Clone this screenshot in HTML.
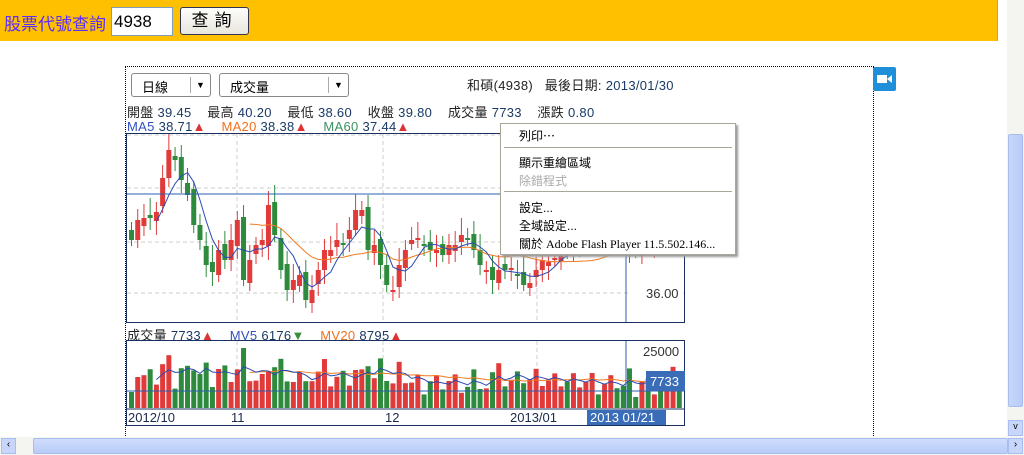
<!DOCTYPE html>
<html><head><meta charset="utf-8"><style>
*{margin:0;padding:0;box-sizing:border-box}
html,body{width:1024px;height:455px;overflow:hidden}
body{background:#fff;font-family:"Liberation Sans","Noto Sans CJK TC",sans-serif;position:relative}
.top{position:absolute;left:0;top:0;width:998px;height:41px;background:#FFC000;border-right:1px solid #e8a000}
.lbl{position:absolute;left:4px;top:10px;font-size:17px;color:#5a2cff}
.inp{position:absolute;left:111px;top:7px;width:62px;height:29px;background:#fff;border:1px solid #7f9db9;font-size:17px;padding:4px 2px}
.btn{position:absolute;left:180px;top:7px;width:69px;height:28px;background:linear-gradient(#fdfdfb,#e8e6dc);border:1px solid #335;border-radius:3px;font-size:17px;text-align:center;line-height:26px;letter-spacing:6px}
.frame{position:absolute;left:125px;top:66px;width:749px;height:380px;border:1px dotted #000}
.t{position:absolute;font-size:13px;color:#222;white-space:nowrap;letter-spacing:0.3px}
.n{color:#1a3a66}
.sel{position:absolute;top:73px;height:24px;border:1px solid #888;border-radius:3px;background:#fff;font-size:13px;padding:3px 10px}
.sel i{position:absolute;right:0;top:3px;width:20px;height:16px;border-left:1px solid #aaa;font-style:normal;font-size:9px;text-align:center;line-height:16px}
.menu{position:absolute;left:500px;top:123px;width:236px;height:132px;background:#fff;border:1px solid #aaa69a;box-shadow:2px 2px 2px #999;font-size:12px}
.menu div{position:absolute;left:18px}
.menu hr{position:absolute;left:3px;width:228px;border:0;border-top:1px solid #aaa69a}
.vs{position:absolute;left:1007px;top:0;width:17px;height:437px;background:#f4f4f0}
.hs{position:absolute;left:0;top:437px;width:1024px;height:18px;background:#f4f4f0}
</style></head><body>
<div class="top"><div class="lbl">股票代號查詢</div><div class="inp">4938</div><div class="btn">查詢</div></div>
<div class="frame"></div>
<div style="position:absolute;left:873px;top:67px;width:23px;height:24px;background:#1e8fd8;border-radius:2px"><div style="position:absolute;left:4px;top:8px;width:10px;height:8px;background:#fff"></div><div style="position:absolute;left:14px;top:8px;width:0;height:0;border-top:4px solid transparent;border-bottom:4px solid transparent;border-right:5px solid #fff"></div></div>
<div class="sel" style="left:131px;width:80px">日線<i>▼</i></div>
<div class="sel" style="left:219px;width:130px">成交量<i>▼</i></div>
<div class="t" style="left:467px;top:75px">和碩(4938)&nbsp;&nbsp; 最後日期: <span class="n">2013/01/30</span></div>
<div class="t" style="left:127px;top:102px">開盤 <span class="n">39.45</span>&nbsp;&nbsp;&nbsp; 最高 <span class="n">40.20</span>&nbsp;&nbsp;&nbsp; 最低 <span class="n">38.60</span>&nbsp;&nbsp;&nbsp; 收盤 <span class="n">39.80</span>&nbsp;&nbsp;&nbsp; 成交量 <span class="n">7733</span>&nbsp;&nbsp;&nbsp; 漲跌 <span class="n">0.80</span></div>
<div class="t" style="left:127px;top:119px"><span style="color:#3050c0">MA5</span> <span class="n">38.71</span><span style="color:#d33">▲</span>&nbsp;&nbsp;&nbsp; <span style="color:#f07020">MA20</span> <span class="n">38.38</span><span style="color:#d33">▲</span>&nbsp;&nbsp;&nbsp; <span style="color:#3a9060">MA60</span> <span class="n">37.44</span><span style="color:#d33">▲</span></div>
<div class="t" style="left:127px;top:325px">成交量 <span class="n">7733</span><span style="color:#d33">▲</span>&nbsp;&nbsp;&nbsp; <span style="color:#3050c0">MV5</span> <span class="n">6176</span><span style="color:#3a9040">▼</span>&nbsp;&nbsp;&nbsp; <span style="color:#f07020">MV20</span> <span class="n">8795</span><span style="color:#d33">▲</span></div>
<svg id="c" width="1024" height="455" style="position:absolute;left:0;top:0"></svg>
<div class="menu">
<div style="top:3px">列印⋯</div><hr style="top:23px">
<div style="top:30px">顯示重繪區域</div><div style="top:48px;color:#aaa">除錯程式</div><hr style="top:67px">
<div style="top:75px">設定...</div><div style="top:93px">全域設定...</div><div style="top:111px;font-family:'Liberation Serif','Noto Sans CJK TC',serif">關於 Adobe Flash Player 11.5.502.146...</div>
</div>
<div class="vs"><div style="position:absolute;left:1px;top:134px;width:15px;height:273px;background:linear-gradient(90deg,#c8d6fb,#b8ccf8);border:1px solid #a9bdee;border-radius:2px"></div><div style="position:absolute;left:1px;top:420px;width:15px;height:16px;background:#c8d6fb;border:1px solid #a9bdee;font-size:9px;text-align:center">v</div></div>
<div class="hs"><div style="position:absolute;left:1px;top:1px;width:15px;height:16px;background:#c8d6fb;border:1px solid #a9bdee;font-size:10px;text-align:center">‹</div><div style="position:absolute;left:33px;top:1px;width:975px;height:16px;background:linear-gradient(#d0ddfc,#b8ccf8);border:1px solid #a9bdee;border-radius:2px"></div><div style="position:absolute;left:1008px;top:1px;width:15px;height:16px;background:#c8d6fb;border:1px solid #a9bdee;font-size:10px;text-align:center">›</div></div>
<script>
var s=document.getElementById('c'),h='';
function R(x,y,w,hh,f,st){h+='<rect x="'+x+'" y="'+y+'" width="'+w+'" height="'+hh+'" fill="'+f+'"'+(st?' stroke="'+st+'"':'')+'/>';}
function L(x1,y1,x2,y2,c,d){h+='<line x1="'+x1+'" y1="'+y1+'" x2="'+x2+'" y2="'+y2+'" stroke="'+c+'"'+(d?' stroke-dasharray="4,3"':'')+'/>';}
[135,188,242,293].forEach(function(y){L(127,y,685,y,'#ccc',1)});
[237,383,537].forEach(function(x){L(x,134,x,322,'#ccc',1);L(x,341,x,408,'#ccc',1)});
var cl=[240,220,218,218,212,178,150,160,180,195,225,240,265,272,250,260,240,220,280,260,245,240,205,235,270,290,280,275,300,290,270,250,250,240,245,230,210,210,250,245,265,285,290,265,250,240,238,245,250,250,255,245,245,235,240,250,265,270,280,270,270,268,275,285,283,270,260,262,258,250,248,245,240,232,230,225,222,225,235,240,250,250,245,243,240,238,236,235,240];
var n=cl.length,st=(683-129)/n,p5='',p20='',vp5='',vp20='',vol=[];
for(var i=0;i<n;i++){var x=129+i*st,o=i?cl[i-1]+((i*7)%5-2)*3:230,c=cl[i],up=c<o,col=up?'#e03a3a':'#2e8b3e';
var t=Math.min(o,c),b=Math.max(o,c);if(b-t<2)b=t+2;L(x+2.5,t-8-(i*13)%10,x+2.5,b+6+(i*11)%9,col);R(x,t,5,b-t,col);
var v=10+((i*37)%28)+(Math.abs(o-c)*0.6);if(v>60)v=60;vol.push(v);R(x,408-v,5,v,col);
if(i>=4){var a=0;for(var k=i-4;k<=i;k++)a+=cl[k];p5+=(p5?'L':'M')+(x+2.5)+','+(a/5);var va=0;for(k=i-4;k<=i;k++)va+=vol[k];vp5+=(vp5?'L':'M')+(x+2.5)+','+(408-va/5);}
if(i>=19){a=0;for(k=i-19;k<=i;k++)a+=cl[k];p20+=(p20?'L':'M')+(x+2.5)+','+(a/20);va=0;for(k=i-19;k<=i;k++)va+=vol[k];vp20+=(vp20?'L':'M')+(x+2.5)+','+(408-va/20);}}
h+='<path d="'+p20+'" fill="none" stroke="#f07a20"/><path d="'+p5+'" fill="none" stroke="#2a4ab0"/>';
h+='<path d="'+vp20+'" fill="none" stroke="#f07a20"/><path d="'+vp5+'" fill="none" stroke="#2a4ab0"/>';
L(127,194,685,194,'#2a5fb0');L(626,134,626,322,'#2a5fb0');L(127,391,685,391,'#2a5fb0');L(626,341,626,408,'#2a5fb0');
R(126.5,133.5,558,189,'none','#1a3060');R(126.5,340.5,558,85,'none','#1a3060');L(127,409,685,409,'#1a3060');
h+='<rect x="630" y="284" width="53" height="17" fill="#fff"/><text x="646" y="298" font-size="13" fill="#333" font-family="Liberation Sans">36.00</text>';
h+='<rect x="640" y="343" width="43" height="15" fill="#fff"/><text x="643" y="356" font-size="13" fill="#333" font-family="Liberation Sans">25000</text>';
R(646,371,39,20,'#3a6db8');h+='<text x="650" y="386" font-size="13" fill="#fff" font-family="Liberation Sans">7733</text>';
R(587,410,79,15,'#3a6db8');h+='<text x="590" y="422" font-size="13" fill="#fff" font-family="Liberation Sans">2013 01/21</text>';
[[128,'2012/10'],[231,'11'],[385,'12'],[510,'2013/01']].forEach(function(a){h+='<text x="'+a[0]+'" y="422" font-size="13" fill="#1a2a4a" font-family="Liberation Sans">'+a[1]+'</text>'});
s.innerHTML=h;
</script>
</body></html>
